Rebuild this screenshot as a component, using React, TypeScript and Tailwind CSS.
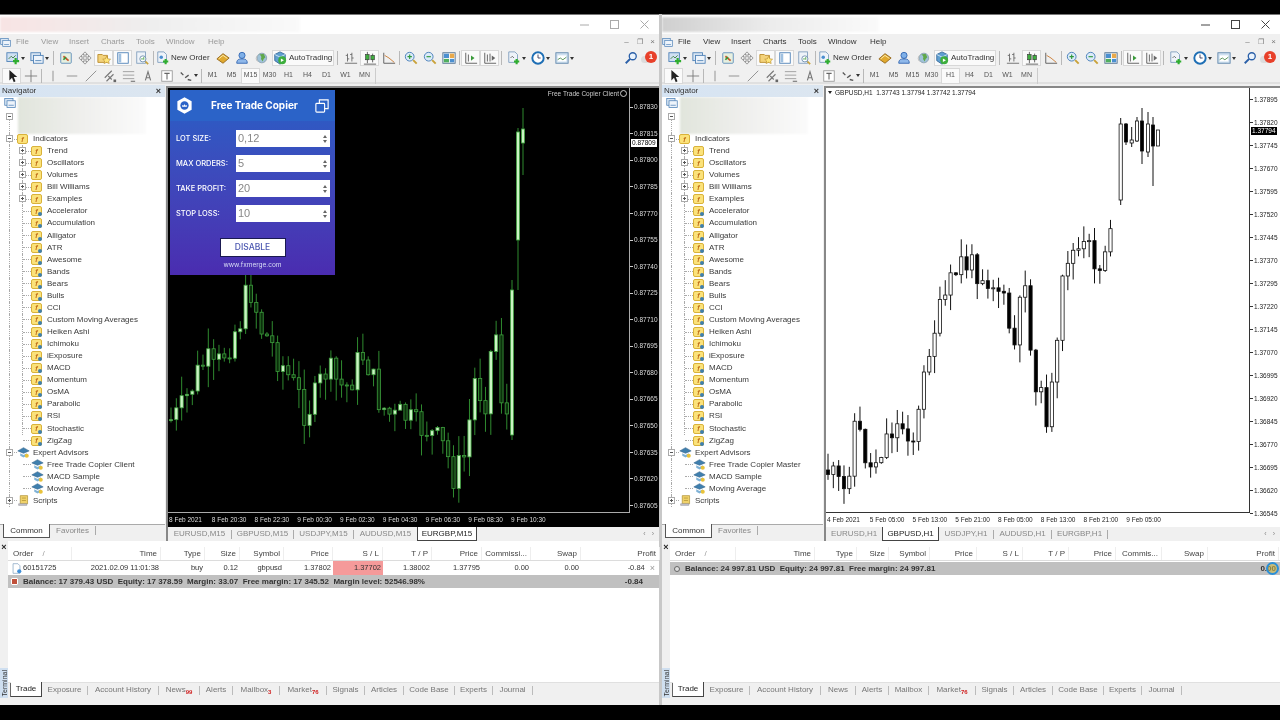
import type { ReactNode } from "react";

type Pt = [number, number];
type Candle = { x: number; o: number; c: number; h: number; l: number };

function build(points: Pt[], seed: number, amp: number, extra: Candle[]): Candle[] {
  const out: Candle[] = [];
  let s = seed;
  const rnd = () => {
    s = (s * 9301 + 49297) % 233280;
    return s / 233280;
  };
  let prev = points[0][1];
  for (let x = points[0][0]; x <= points[points.length - 1][0]; x += 5.33) {
    let i = 0;
    while (i < points.length - 2 && points[i + 1][0] < x) i++;
    const [x0, y0] = points[i];
    const [x1, y1] = points[i + 1];
    const y = y0 + ((y1 - y0) * (x - x0)) / (x1 - x0);
    const c = y + (rnd() - 0.5) * amp;
    const top = Math.min(prev, c);
    const bot = Math.max(prev, c);
    out.push({ x, o: prev, c, h: top - rnd() * amp * 0.6, l: bot + rnd() * amp * 0.6 });
    prev = c;
  }
  return [...out, ...extra];
}

const leftCandles = build(
  [[171, 420], [180, 415], [190, 390], [205, 360], [215, 375], [225, 350], [240, 320], [250, 285], [262, 330], [275, 350], [285, 370], [295, 390], [305, 410], [315, 400], [325, 370], [335, 380], [345, 390], [355, 370], [365, 350], [375, 390], [385, 410], [395, 420], [405, 415], [415, 430], [425, 425], [435, 440], [445, 450], [455, 478], [465, 455], [475, 380], [485, 400], [495, 320], [502, 400], [508, 420]],
  7,
  36,
  [
    { x: 512, o: 435, c: 290, h: 280, l: 440 },
    { x: 518, o: 240, c: 132, h: 128, l: 290 },
    { x: 523, o: 143, c: 129, h: 108, l: 175 },
  ],
);

const rightCandles = build(
  [[828, 470], [845, 495], [855, 420], [870, 470], [890, 430], [905, 425], [915, 440], [930, 340], [945, 300], [960, 262], [980, 270], [1000, 290], [1015, 350], [1025, 270], [1030, 350], [1045, 420], [1055, 380], [1065, 255], [1090, 250], [1100, 270], [1115, 200]],
  11,
  30,
  [
    { x: 1120.7, o: 200, c: 124, h: 118, l: 205 },
    { x: 1126, o: 124, c: 142, h: 123, l: 145 },
    { x: 1131.7, o: 143, c: 140, h: 127, l: 147 },
    { x: 1137, o: 141, c: 121, h: 117, l: 142 },
    { x: 1142, o: 121, c: 151, h: 108, l: 164 },
    { x: 1148, o: 152, c: 124, h: 112, l: 157 },
    { x: 1153, o: 125, c: 146, h: 117, l: 186 },
    { x: 1158, o: 146, c: 130, h: 130, l: 146 },
  ],
);

function Ico({ children, className = "w-[14px] h-[14px]" }: { children: ReactNode; className?: string }) {
  return (
    <svg viewBox="0 0 16 16" className={className} fill="none">
      {children}
    </svg>
  );
}

const icons: Record<string, ReactNode> = {
  newchart: <><rect x="1" y="2" width="12" height="10" fill="#cfe0f2" stroke="#4b7fb5" /><path d="M3 9l3-3 2 2 3-3" stroke="#3a7a3a" /><path d="M11 8v7M8 11.500h7" stroke="#2fae2f" strokeWidth="2.500" /></>,
  profiles: <><rect x="1" y="2" width="11" height="9" fill="#dbe7f4" stroke="#4b7fb5" /><rect x="4" y="5" width="11" height="9" fill="#eef4fb" stroke="#4b7fb5" /><path d="M6 11h7" stroke="#4b7fb5" /></>,
  market: <><rect x="2" y="2" width="12" height="12" rx="1" fill="#e7f0e0" stroke="#5a8ab8" /><path d="M5 6l6 5" stroke="#c9572b" strokeWidth="2" /><path d="M5 10l3-3" stroke="#3a9a3a" strokeWidth="2" /></>,
  nav: <><path d="M8 1l3 3H9v3h3V5l3 3-3 3V9H9v3h2l-3 3-3-3h2V9H4v2L1 8l3-3v2h3V4H5z" fill="#eee" stroke="#777" strokeWidth=".8" /></>,
  star: <><path d="M1 4h5l1 1h5v8H1z" fill="#f3d27a" stroke="#b98a2a" /><path d="M11 6l1.500 3 3 .4-2.200 2 .6 3-2.900-1.500-2.900 1.500.6-3-2.200-2 3-.4z" fill="#ffe67a" stroke="#b98a2a" strokeWidth=".7" /></>,
  term: <><rect x="2" y="2" width="12" height="12" fill="#fff" stroke="#4b7fb5" /><rect x="3" y="3" width="3" height="10" fill="#9fc0e0" /></>,
  tester: <><rect x="2" y="1" width="10" height="13" fill="#eef3f9" stroke="#7e9dbd" /><circle cx="9" cy="9" r="3.500" fill="#fff" stroke="#6a8cab" /><path d="M12 12l3 3" stroke="#c9a23a" strokeWidth="2" /><path d="M8 10V8M10 10V7" stroke="#3a9a3a" /></>,
  order: <><path d="M2 1h7l3 3v9H2z" fill="#eef3f9" stroke="#7e9dbd" /><circle cx="6" cy="7" r="2" fill="#4b8fd0" /><path d="M11 9v6M8 12h6" stroke="#2fae2f" strokeWidth="2.400" /></>,
  doc: <><path d="M3 1h7l3 3v11H3z" fill="#fff" stroke="#7e9dbd" /><circle cx="12" cy="12" r="3" fill="#3f8fd8" /></>,
  editor: <><path d="M1 9l7-6 7 5-7 6z" fill="#e0a92f" stroke="#94661a" /><path d="M3 9l5-4 5 3.500" stroke="#fff2b8" /></>,
  people: <><circle cx="8" cy="5" r="3.500" fill="#7fb0e8" stroke="#2f64b0" /><path d="M2 14c0-4 2-5 6-5s6 1 6 5z" fill="#8fb8ea" stroke="#2f64b0" /></>,
  globe: <><circle cx="9" cy="8" r="5.500" fill="#9fc2d8" stroke="#8aa0b0" /><path d="M6 4c2 1 3 3 2 5l2 3 1-3 2-2-2-4z" fill="#5fa84a" /><path d="M4 5c-2 2-2 5 0 7" stroke="#bbb" /></>,
  auto: <><path d="M8 1l6 3v7l-6 4-6-4V4z" fill="#5f9fd0" stroke="#37699a" /><path d="M2 4l6 3 6-3" stroke="#d7e9f7" /><circle cx="10.500" cy="10.500" r="4.500" fill="#3dae3d" /><path d="M9 8.500v4l3.500-2z" fill="#fff" /></>,
  bar: <><path d="M4 3v9M2 5h2M4 9h2M9 2v10M7 4h2M9 8h2M1 14h14" stroke="#666" /></>,
  candle: <><path d="M5 1v13M11 3v10M1 15h14" stroke="#555" /><rect x="3" y="4" width="4" height="6" fill="#3fae3f" stroke="#333" strokeWidth=".7" /><rect x="9" y="5" width="4" height="5" fill="#3fae3f" stroke="#333" strokeWidth=".7" /></>,
  line: <><path d="M2 2v12h13" stroke="#555" /><path d="M3 5l5 3 6 5" stroke="#c9772b" /></>,
  zoomin: <><circle cx="6.500" cy="6.500" r="5" fill="#dbeafa" stroke="#3f78b5" /><path d="M4 6.500h5M6.500 4v5" stroke="#2f9a3a" strokeWidth="1.300" /><path d="M10.500 10.500l4 4" stroke="#c9a23a" strokeWidth="2.200" /></>,
  zoomout: <><circle cx="6.500" cy="6.500" r="5" fill="#dbeafa" stroke="#3f78b5" /><path d="M4 6.500h5" stroke="#2f9a3a" strokeWidth="1.300" /><path d="M10.500 10.500l4 4" stroke="#c9a23a" strokeWidth="2.200" /></>,
  grid: <><rect x="1" y="2" width="14" height="12" fill="#fff" stroke="#4a6a8a" /><rect x="2" y="3" width="6" height="5" fill="#4b8fd0" /><rect x="9" y="3" width="5" height="5" fill="#e9a94a" /><rect x="2" y="9" width="6" height="4" fill="#4fae5f" /><rect x="9" y="9" width="5" height="4" fill="#4b8fd0" /></>,
  shift: <><path d="M2 2v12h13M5 4v8" stroke="#555" /><path d="M8 5v6l4-3z" fill="#3a9a3a" /></>,
  scroll: <><path d="M2 2v12h13M5 4v8M8 3v9" stroke="#555" /><path d="M10 5v6l4-3z" fill="#666" /></>,
  indic: <><path d="M2 1h7l3 3v9H2z" fill="#eef3f9" stroke="#7e9dbd" /><path d="M4 8l2-2 2 2" stroke="#666" /><path d="M11 9v6M8 12h6" stroke="#2fae2f" strokeWidth="2.400" /></>,
  clock: <><circle cx="8" cy="8" r="6.500" fill="#fff" stroke="#1f6fb5" strokeWidth="2.200" /><path d="M8 4v4h3" stroke="#335" /></>,
  templ: <><rect x="1" y="2" width="14" height="12" fill="#cfe0f0" stroke="#5f86aa" /><rect x="3" y="5" width="10" height="7" fill="#fff" /><path d="M3 10l3-2 3 2 4-3" stroke="#4a8a4a" /></>,
  search: <><circle cx="10" cy="6" r="4" fill="#eaf3fc" stroke="#2a5fa8" strokeWidth="1.500" /><path d="M7 9l-5 5" stroke="#2a5fa8" strokeWidth="2.200" /></>,
  arrow: <><path d="M5 1v12l3-3 2 5 2-1-2-5h4z" fill="#222" /></>,
  cross: <><path d="M8 1v14M1 8h14" stroke="#777" /></>,
  vline: <><path d="M8 2v12" stroke="#888" /></>,
  hline: <><path d="M2 8h12" stroke="#888" /></>,
  diag: <><path d="M2 14L14 2" stroke="#888" /></>,
  channel: <><path d="M2 10l8-8M4 14l8-8M6 8l4 4" stroke="#777" strokeWidth="1.300" /><path d="M12 12h3v3h-3z" fill="#666" /></>,
  fibo: <><path d="M1 3h13M1 7h13M1 11h13" stroke="#999" /><path d="M10 14h5" stroke="#555" /></>,
  text: <><path d="M5 13l3-10 3 10M6 10h4" stroke="#777" strokeWidth="1.300" /></>,
  label: <><rect x="2" y="2" width="12" height="12" fill="#fff" stroke="#999" /><path d="M5 5h6M8 5v7" stroke="#666" strokeWidth="1.200" /></>,
  arrows: <><path d="M2 4l3 3M7 10l4-3M10 12l4 1" stroke="#555" strokeWidth="1.500" /></>,
};

function Btn({ name, active, caret }: { name: string; active?: boolean; caret?: boolean }) {
  return (
    <div
      className={`flex items-center justify-center h-[16px] shrink-0 ${caret ? "w-[24px] gap-[1px]" : "w-[19px]"} ${
        active ? "bg-[#fafafa] border border-[#d8d8d8]" : ""
      }`}
    >
      <Ico>{icons[name]}</Ico>
      {caret && <span className="w-0 h-0 border-x-[2px] border-x-transparent border-t-[3px] border-t-[#333]" />}
    </div>
  );
}

const Sep = ({ m = "mx-[2px]" }: { m?: string }) => <div className={`w-[1px] h-[14px] ${m} bg-[#b8b8b8] shrink-0`} />;

function Toolbars({ timeframe, spacer }: { timeframe: string; spacer: string }) {
  const frames = ["M1", "M5", "M15", "M30", "H1", "H4", "D1", "W1", "MN"];
  return (
    <>
      <div className="flex items-center h-[16px] pl-[3px] bg-[#f0f0f0] text-[8px] text-[#333]">
        <Btn name="newchart" caret />
        <Btn name="profiles" caret />
        <Sep />
        <Btn name="market" />
        <Btn name="nav" />
        <Btn name="star" active />
        <Btn name="term" active />
        <Btn name="tester" />
        <Sep />
        <div className="flex items-center w-[57px] shrink-0 gap-[1px] whitespace-nowrap">
          <Ico>{icons.order}</Ico>
          <span>New Order</span>
        </div>
        <Btn name="editor" />
        <Btn name="people" />
        <Btn name="globe" />
        <div className="flex items-center w-[62px] h-[16px] gap-[2px] ml-[2px] shrink-0 bg-[#fafafa] border border-[#d8d8d8] whitespace-nowrap">
          <Ico>{icons.auto}</Ico>
          <span>AutoTrading</span>
        </div>
        <Sep m="mx-[3px]" />
        <Btn name="bar" />
        <Btn name="candle" active />
        <Btn name="line" />
        <Sep m="mx-[1px]" />
        <Btn name="zoomin" />
        <Btn name="zoomout" />
        <Btn name="grid" />
        <Sep m="mx-[1px]" />
        <Btn name="shift" active />
        <Btn name="scroll" active />
        <Sep />
        <Btn name="indic" caret />
        <Btn name="clock" caret />
        <Btn name="templ" caret />
        <div className={`${spacer} shrink-0`} />
        <Btn name="search" />
        <div className="relative w-[20px] h-[16px] shrink-0">
          <div className="absolute left-[1px] top-[6px] w-[9px] h-[7px] rounded-full bg-[#dcdcdc]" />
          <div className="absolute left-[5px] top-[1px] w-[12px] h-[12px] rounded-full bg-[#e8402a] text-white text-[8px] leading-[12px] text-center font-bold">
            1
          </div>
        </div>
      </div>
      <div className="flex items-center h-[18px] pt-[3px] pl-[2px] bg-[#f0f0f0] text-[7px] text-[#555] border-b-[2px] border-[#e0e0e0]">
        <Btn name="arrow" active />
        <Btn name="cross" />
        <Sep m="mx-[1px]" />
        <Btn name="vline" />
        <Btn name="hline" />
        <Btn name="diag" />
        <Btn name="channel" />
        <Btn name="fibo" />
        <Btn name="text" />
        <Btn name="label" />
        <Btn name="arrows" caret />
        <Sep m="mx-[1px]" />
        {frames.map((f) => (
          <div
            key={f}
            className={`w-[19px] h-[16px] shrink-0 flex items-center justify-center ${
              f === timeframe ? "bg-[#fafafa] border border-[#d8d8d8]" : ""
            }`}
          >
            {f}
          </div>
        ))}
        <div className="w-[1px] h-[16px] bg-[#ccc] ml-[1px]" />
      </div>
    </>
  );
}

const treeRows: { label: string; level: number; icon: "f" | "fx" | "ea" | "sc"; exp?: "+" | "-" }[] = [
  { label: "Indicators", level: 0, icon: "f", exp: "-" },
  { label: "Trend", level: 1, icon: "f", exp: "+" },
  { label: "Oscillators", level: 1, icon: "f", exp: "+" },
  { label: "Volumes", level: 1, icon: "f", exp: "+" },
  { label: "Bill Williams", level: 1, icon: "f", exp: "+" },
  { label: "Examples", level: 1, icon: "f", exp: "+" },
  ...["Accelerator", "Accumulation", "Alligator", "ATR", "Awesome", "Bands", "Bears", "Bulls", "CCI", "Custom Moving Averages", "Heiken Ashi", "Ichimoku", "iExposure", "MACD", "Momentum", "OsMA", "Parabolic", "RSI", "Stochastic", "ZigZag"].map((label) => ({
    label,
    level: 1,
    icon: "fx" as const,
  })),
  { label: "Expert Advisors", level: 0, icon: "ea", exp: "-" },
];

function TreeIcon({ kind }: { kind: string }) {
  if (kind === "ea")
    return (
      <Ico className="w-[13px] h-[13px]">
        <path d="M1 6l7-4 7 4-7 3z" fill="#3f7fae" stroke="#2a5a80" strokeWidth=".6" />
        <path d="M4 9l4 2 4-2v3l-4 2-4-2z" fill="#7fb2d6" />
        <circle cx="12" cy="12" r="2.500" fill="#e8c23a" />
      </Ico>
    );
  if (kind === "sc")
    return (
      <Ico className="w-[13px] h-[13px]">
        <path d="M4 2h9v10H4z" fill="#f0d26a" stroke="#a98a2a" strokeWidth=".8" />
        <path d="M2 12h10v2H2z" fill="#c9c9d8" stroke="#888" strokeWidth=".6" />
        <path d="M6 5h5M6 8h5" stroke="#a98a2a" strokeWidth=".8" />
      </Ico>
    );
  return (
    <div className="relative w-[11px] h-[10px] rounded-[2px] bg-[#fbe27a] border border-[#d9b23a] shrink-0 flex items-center justify-center">
      <span className="text-[7px] leading-none italic font-bold text-[#c2701a]">f</span>
      {kind === "fx" && <span className="absolute right-[-1px] bottom-[-1px] w-[4px] h-[4px] rounded-full bg-[#3f7fae]" />}
    </div>
  );
}

function Expander({ sign, className }: { sign: string; className: string }) {
  return (
    <div className={`absolute w-[7px] h-[7px] bg-white border border-[#aaa] flex items-center justify-center ${className}`}>
      <div className="relative w-[3px] h-[1px] bg-[#555]">
        {sign === "+" && <div className="absolute left-[1px] top-[-1px] w-[1px] h-[3px] bg-[#555]" />}
      </div>
    </div>
  );
}

function Row({ children, line2, exp, level }: { children: ReactNode; line2?: boolean; exp?: string; level: number }) {
  return (
    <div className="flex items-center h-[12.07px] relative">
      <div className="w-[10px] h-full border-r border-dotted border-[#aaa] shrink-0" />
      <div className={`${level === 0 ? "w-[0px]" : "w-[13px]"} h-full shrink-0 ${line2 ? "border-r border-dotted border-[#aaa]" : ""}`} />
      {exp && <Expander sign={exp} className={level === 0 ? "left-[6px] top-[2px]" : "left-[19px] top-[2px]"} />}
      <div className={`${level === 0 ? "w-[7px]" : "w-[8px]"} border-t border-dotted border-[#aaa] shrink-0`} />
      {children}
    </div>
  );
}

function Navigator({ widthClass, leaves }: { widthClass: string; leaves: string[] }) {
  return (
    <div className={`${widthClass} shrink-0 bg-[#f0f0f0] flex flex-col`}>
      <div className="h-[12px] mt-[1px] flex items-center justify-between px-[2px] bg-gradient-to-r from-[#d6e4f3] to-[#dce6f0] text-[8px] text-[#333]">
        <span>Navigator</span>
        <span className="font-bold text-[9px] mr-[2px] leading-none">×</span>
      </div>
      <div className="flex-1 bg-white text-[8px] leading-[12px] text-[#3a3a3a] overflow-hidden">
        <div className="flex h-[36px] pl-[2px]">
          <div className="w-[15px] flex flex-col items-center shrink-0">
            <Ico className="w-[12px] h-[12px]">{icons.profiles}</Ico>
            <div className="w-[7px] h-[7px] mt-[4px] bg-white border border-[#aaa] flex items-center justify-center">
              <div className="w-[3px] h-[1px] bg-[#555]" />
            </div>
            <div className="flex-1 border-l border-dotted border-[#aaa]" />
          </div>
          <div className="w-[128px] h-[37px] ml-[1px] bg-gradient-to-r from-[#e1e5dc] via-[#efefed] to-[#fbfbfb] blur-[1px]" />
        </div>
        {treeRows.map((r, i) => (
          <Row key={r.label} level={r.level} exp={r.exp} line2={r.level === 1 && i < 25}>
            <div className="w-[16px] flex justify-start shrink-0">
              <TreeIcon kind={r.icon} />
            </div>
            <span className="whitespace-nowrap">{r.label}</span>
          </Row>
        ))}
        {leaves.map((l) => (
          <Row key={l} level={1} line2={false}>
            <div className="w-[16px] flex justify-start shrink-0">
              <TreeIcon kind="ea" />
            </div>
            <span className="whitespace-nowrap">{l}</span>
          </Row>
        ))}
        <Row level={0} exp="+">
          <div className="w-[16px] flex justify-start shrink-0">
            <TreeIcon kind="sc" />
          </div>
          <span>Scripts</span>
        </Row>
      </div>
      <div className="h-[17px] flex items-start pl-[3px] bg-[#f0f0f0] border-t border-[#aaa] text-[8px]">
        <div className="h-[14px] w-[47px] -mt-[1px] flex items-center justify-center bg-white border-l border-r border-b border-[#555] text-[#333]">
          Common
        </div>
        <div className="w-[45px] h-[12px] flex items-center justify-center text-[#888]">Favorites</div>
        <div className="w-[1px] h-[9px] mt-[1px] bg-[#aaa]" />
      </div>
    </div>
  );
}

function CandleChart({ data, viewBox, dark, width, height }: { data: Candle[]; viewBox: string; dark: boolean; width: number; height: number }) {
  return (
    <svg viewBox={viewBox} width={width} height={height} className="block">
      {data.map((d) => {
        const up = d.c < d.o;
        const top = Math.min(d.o, d.c);
        const h = Math.max(Math.abs(d.o - d.c), 1);
        return (
          <g key={d.x}>
            <line x1={d.x} x2={d.x} y1={d.h} y2={d.l} stroke={dark ? "#2f8a2f" : "#111"} strokeWidth={1} />
            <rect
              x={d.x - 1.6}
              y={top}
              width={3.2}
              height={h}
              fill={dark ? (up ? "#c9f3c2" : "#0b2f0b") : up ? "#fff" : "#000"}
              stroke={dark ? "#3e9e3e" : "#111"}
              strokeWidth={0.8}
            />
          </g>
        );
      })}
    </svg>
  );
}

function ChartTabs({ tabs, active }: { tabs: { l: string; w: string }[]; active: string }) {
  return (
    <div className="h-[14px] bg-[#f0f0f0] flex items-center text-[8px] text-[#888]">
      {tabs.map((t, i) => (
        <div
          key={t.l}
          className={`${t.w} h-[14px] shrink-0 flex items-center justify-center ${
            t.l === active ? "bg-white border-x border-b border-[#444] text-[#222]" : ""
          }`}
        >
          <span className="flex-1 text-center">{t.l}</span>
          {t.l !== active && tabs[i + 1]?.l !== active && <span className="w-px h-[9px] bg-[#aaa]" />}
        </div>
      ))}
      <div className="flex-1" />
      <span className="text-[7px] text-[#888] mr-[6px]">‹</span>
      <span className="text-[7px] text-[#888] mr-[5px]">›</span>
    </div>
  );
}

const tabs = [
  { l: "Exposure", w: "w-[46px]", n: "w-[46px]" },
  { l: "Account History", w: "w-[71px]", n: "w-[71px]" },
  { l: "News", w: "w-[41px]", n: "w-[35px]", b: "99" },
  { l: "Alerts", w: "w-[33px]", n: "w-[33px]" },
  { l: "Mailbox", w: "w-[47px]", n: "w-[40px]", b: "3" },
  { l: "Market", w: "w-[47px]", n: "w-[47px]", b: "76" },
  { l: "Signals", w: "w-[38px]", n: "w-[38px]" },
  { l: "Articles", w: "w-[39px]", n: "w-[39px]" },
  { l: "Code Base", w: "w-[51px]", n: "w-[51px]" },
  { l: "Experts", w: "w-[38px]", n: "w-[38px]" },
  { l: "Journal", w: "w-[40px]", n: "w-[40px]" },
];

function Terminal({ cols, headers, children, badges }: { cols: string; headers: string[]; children: ReactNode; badges: string[] }) {
  return (
    <div className="flex-1 flex bg-white min-h-0">
      <div className="w-[8px] shrink-0 bg-[#f0f0f0] flex flex-col items-center justify-between pb-[7px]">
        <span className="text-[9px] font-bold leading-none mt-[2px] text-[#222]">×</span>
        <div className="w-[8px] h-[30px] bg-[#cfdff0] flex items-center justify-center">
          <span className="[writing-mode:vertical-rl] rotate-180 text-[7px] text-[#333] leading-none">Terminal</span>
        </div>
      </div>
      <div className="flex-1 flex flex-col min-w-0">
        <div className={`grid ${cols} h-[14px] mt-[6px] border-b border-[#dcdcdc] text-[8px] text-[#444]`}>
          {headers.map((h, i) => (
            <div key={i} className={`flex items-center whitespace-nowrap border-r border-[#eee] ${i === 0 ? "pl-[5px]" : "justify-end pr-[3px]"}`}>
              {h}
              {i === 0 && <span className="ml-[9px] text-[#999]">/</span>}
            </div>
          ))}
        </div>
        <div className="flex-1 min-h-0 text-[7.5px] text-[#333]">{children}</div>
        <div className="h-[15px] flex items-center bg-[#f0f0f0] text-[8px] text-[#777] border-t-[1px] border-[#e0e0e0]">
          <div className="w-[3px] h-full border-r border-[#666]" />
          <div className="w-[31px] h-[15px] -mt-[1px] flex items-center justify-center bg-white border-r border-b border-[#444] text-[#222]">Trade</div>
          {tabs.map((t) => (
            <div key={t.l} className={`${badges.length > 1 ? t.w : t.n} shrink-0 flex items-center justify-center border-r border-[#bbb] h-[9px] whitespace-nowrap`}>
              {t.l}
              {badges.includes(t.l) && <span className="text-[6px] text-[#d02020] font-bold self-end translate-y-[2px]">{t.b}</span>}
            </div>
          ))}
        </div>
        <div className="h-[8px] bg-[#f0f0f0]" />
      </div>
    </div>
  );
}

const Cell = ({ children, pink }: { children?: ReactNode; pink?: boolean }) => (
  <div className={`flex items-center justify-end pr-[2px] whitespace-nowrap ${pink ? "bg-[#f59a9a]" : ""}`}>{children}</div>
);

function Window({
  title,
  menuColor,
  ctrlStroke,
  timeframe,
  spacer,
  nav,
  chart,
  axis,
  dates,
  tabs: chartTabs,
  terminal,
}: {
  title: string;
  menuColor: string;
  ctrlStroke: string;
  timeframe: string;
  spacer: string;
  nav: ReactNode;
  chart: ReactNode;
  axis: ReactNode;
  dates: ReactNode;
  tabs: ReactNode;
  terminal: ReactNode;
}) {
  return (
    <div className="h-full flex-1 min-w-0 flex flex-col bg-white border-t border-[#777]">
      <div className="h-[19px] flex items-center bg-white shrink-0">
        <div className={`${title} h-[15px] blur-[1px]`} />
        <div className="flex-1" />
        {[
          <path key="min" d="M0 5h9" />,
          <rect key="max" x=".5" y=".5" width="8" height="8" />,
          <path key="close" d="M.5.5l8 8M8.500.5l-8 8" />,
        ].map((shape, i) => (
          <div key={i} className="w-[30px] flex justify-center">
            <svg viewBox="0 0 9 9" className="w-[9px] h-[9px]" fill="none" stroke={ctrlStroke}>
              {shape}
            </svg>
          </div>
        ))}
      </div>
      <div className={`h-[16px] flex items-center bg-[#f0f0f0] text-[8px] ${menuColor} shrink-0`}>
        <Ico className="w-[11px] h-[11px] mr-[5px]">{icons.profiles}</Ico>
        <span className="w-[25px]">File</span>
        <span className="w-[28px]">View</span>
        <span className="w-[32px]">Insert</span>
        <span className="w-[35px]">Charts</span>
        <span className="w-[30px]">Tools</span>
        <span className="w-[42px]">Window</span>
        <span>Help</span>
        <div className="flex-1" />
        <span className="w-[13px] text-[#777] text-center">–</span>
        <span className="w-[13px] text-[#777] text-center text-[7px]">❐</span>
        <span className="w-[13px] text-[#777] text-center">×</span>
      </div>
      <Toolbars timeframe={timeframe} spacer={spacer} />
      <div className="h-[457px] flex bg-[#f0f0f0] shrink-0">
        {nav}
        <div className="flex-1 min-w-0 flex flex-col mt-[2px] border-l-[2px] border-t-[2px] border-[#888] ml-[1px]">
          <div className="flex-1 flex min-h-0">
            {chart}
            {axis}
          </div>
          {dates}
          {chartTabs}
        </div>
      </div>
      {terminal}
    </div>
  );
}

const leftPrices = ["0.87830", "0.87815", "0.87800", "0.87785", "0.87770", "0.87755", "0.87740", "0.87725", "0.87710", "0.87695", "0.87680", "0.87665", "0.87650", "0.87635", "0.87620", "0.87605"];
const rightPrices = ["1.37895", "1.37820", "1.37745", "1.37670", "1.37595", "1.37520", "1.37445", "1.37370", "1.37295", "1.37220", "1.37145", "1.37070", "1.36995", "1.36920", "1.36845", "1.36770", "1.36695", "1.36620", "1.36545"];

function Axis({ prices, step, top, dark, current, currentTop }: { prices: string[]; step: string; top: string; dark: boolean; current: string; currentTop: string }) {
  return (
    <div className={`relative flex-1 text-[6.5px] ${dark ? "bg-black text-[#ddd]" : "bg-white text-[#222]"} ${top}`}>
      {prices.map((p) => (
        <div key={p} className={`${step} flex items-center`}>
          <span className={`w-[3px] h-px mr-[1px] ${dark ? "bg-[#ccc]" : "bg-[#333]"}`} />
          {p}
        </div>
      ))}
      <div className={`absolute left-[1px] px-[1px] h-[8px] leading-[8px] ${currentTop} ${dark ? "bg-white text-black" : "bg-black text-white"}`}>{current}</div>
    </div>
  );
}

function Dates({ labels, dark }: { labels: string[]; dark: boolean }) {
  return (
    <div className={`h-[14px] flex items-center text-[6.5px] pl-[1px] ${dark ? "bg-black text-[#ddd]" : "bg-white text-[#222]"}`}>
      {labels.map((l) => (
        <div key={l} className="w-[42.75px] shrink-0 whitespace-nowrap">
          {l}
        </div>
      ))}
    </div>
  );
}

const leftCols = "grid-cols-[64px_89px_44px_35px_44px_49px_50px_49px_50px_49px_50px_79px]";
const rightCols = "grid-cols-[66px_79px_42px_32px_41px_47px_46px_46px_47px_46px_46px_71px]";

function CopierPanel() {
  const rows = [
    ["LOT SIZE:", "0,12"],
    ["MAX ORDERS:", "5"],
    ["TAKE PROFIT:", "20"],
    ["STOP LOSS:", "10"],
  ];
  return (
    <div className="absolute left-[2px] top-[2px] w-[165px] h-[185px] flex flex-col bg-gradient-to-b from-[#2460c6] to-[#4a2cb0] font-['Inter',sans-serif] text-white">
      <div className="h-[31px] flex items-center px-[5px] bg-[#2b63c8] shrink-0">
        <svg viewBox="0 0 16 16" className="w-[19px] h-[19px]">
          <path d="M8 1l6 3.500v7L8 15l-6-3.500v-7z" fill="#fff" />
          <circle cx="8" cy="8" r="3.500" fill="#2b63c8" />
          <path d="M6 9V7.500l1 .8 1-1.300 1 1.300 1-.8V9z" fill="#fff" />
        </svg>
        <div className="flex-1 text-center text-[10px] font-bold">Free Trade Copier</div>
        <svg viewBox="0 0 16 16" className="w-[14px] h-[14px]" fill="none" stroke="#fff" strokeWidth="1.300">
          <rect x="1" y="5" width="10" height="10" rx="1" />
          <path d="M5 5V1h10v10h-4" />
        </svg>
        <div className="w-[1px]" />
      </div>
      <div className="flex flex-col gap-[8px] pl-[6px] pt-[9px]">
        {rows.map(([l, v]) => (
          <div key={l} className="flex items-center h-[17px]">
            <div className="w-[60px] text-[7.5px] font-medium whitespace-nowrap">{l}</div>
            <div className="w-[94px] h-[17px] flex items-center justify-between bg-white pl-[2px] pr-[3px] font-['Liberation_Sans',sans-serif] text-[11px] text-[#888]">
              <span>{v}</span>
              <div className="flex flex-col gap-[2px]">
                <span className="w-0 h-0 border-x-[2px] border-x-transparent border-b-[3px] border-b-[#666]" />
                <span className="w-0 h-0 border-x-[2px] border-x-transparent border-t-[3px] border-t-[#666]" />
              </div>
            </div>
          </div>
        ))}
      </div>
      <div className="mx-auto mt-[16px] w-[66px] h-[19px] flex items-center justify-center bg-white border border-[#1a1a50] text-[8.5px] text-[#4a56b0] font-medium">
        DISABLE
      </div>
      <div className="text-center text-[6.5px] text-[#d8dcf5] mt-[4px]">www.fxmerge.com</div>
    </div>
  );
}

export default function App() {
  return (
    <div className="w-[1280px] h-[720px] overflow-hidden bg-black flex flex-col blur-[0.4px] font-['Liberation_Sans',sans-serif]">
      <div className="h-[14px] shrink-0" />
      <div className="h-[691px] flex shrink-0">
        <div className="w-[661px] h-full flex shrink-0 border-r-[2px] border-[#c8c8c8]">
          <Window
            title="w-[300px] bg-gradient-to-r from-[#f8e4e4] via-[#eeeeee] to-[#fafafa]"
            menuColor="text-[#9a9a9a]"
            ctrlStroke="#aaa"
            timeframe="M15"
            spacer="w-[45px]"
            nav={<Navigator widthClass="w-[165px]" leaves={["Free Trade Copier Client", "MACD Sample", "Moving Average"]} />}
            chart={
              <div className="relative w-[462px] h-[425px] bg-black shrink-0 border-r border-b border-[#aaa]">
                <CandleChart data={leftCandles} viewBox="168 88 462 425" dark width={462} height={425} />
                <CopierPanel />
                <div className="absolute right-[2px] top-[1px] flex items-center gap-[1px] text-[6.5px] text-[#ccc]">
                  Free Trade Copier Client
                  <span className="w-[7px] h-[7px] rounded-full border border-[#ccc]" />
                </div>
              </div>
            }
            axis={<Axis prices={leftPrices} step="h-[26.55px]" top="pt-[6px]" dark current="0.87809" currentTop="top-[51px]" />}
            dates={<Dates labels={["8 Feb 2021", "8 Feb 20:30", "8 Feb 22:30", "9 Feb 00:30", "9 Feb 02:30", "9 Feb 04:30", "9 Feb 06:30", "9 Feb 08:30", "9 Feb 10:30"]} dark />}
            tabs={
              <ChartTabs
                active="EURGBP,M15"
                tabs={[
                  { l: "EURUSD,M15", w: "w-[64px]" },
                  { l: "GBPUSD,M15", w: "w-[62px]" },
                  { l: "USDJPY,M15", w: "w-[60px]" },
                  { l: "AUDUSD,M15", w: "w-[63px]" },
                  { l: "EURGBP,M15", w: "w-[60px]" },
                ]}
              />
            }
            terminal={
              <Terminal cols={leftCols} headers={["Order", "Time", "Type", "Size", "Symbol", "Price", "S / L", "T / P", "Price", "Commissi...", "Swap", "Profit"]} badges={["News", "Mailbox", "Market"]}>
                <div className={`grid ${leftCols} h-[14px]`}>
                  <div className="flex items-center pl-[3px] gap-[1px]">
                    <Ico className="w-[11px] h-[11px]">{icons.doc}</Ico>60151725
                  </div>
                  <Cell>2021.02.09 11:01:38</Cell>
                  <Cell>buy</Cell>
                  <Cell>0.12</Cell>
                  <Cell>gbpusd</Cell>
                  <Cell>1.37802</Cell>
                  <Cell pink>1.37702</Cell>
                  <Cell>1.38002</Cell>
                  <Cell>1.37795</Cell>
                  <Cell>0.00</Cell>
                  <Cell>0.00</Cell>
                  <div className="flex items-center justify-end pr-[5px] gap-[5px]">
                    -0.84
                    <span className="text-[#999] text-[9px] leading-none">×</span>
                  </div>
                </div>
                <div className="h-[13px] flex items-center justify-between bg-[#c0c0c0] font-bold text-[8px] pl-[3px] pr-[16px] whitespace-nowrap">
                  <div className="flex items-center gap-[5px]">
                    <div className="w-[7px] h-[7px] rounded-[1px] bg-[#c0503a] border border-white" />
                    <span>Balance: 17 379.43 USD&nbsp; Equity: 17 378.59&nbsp; Margin: 33.07&nbsp; Free margin: 17 345.52&nbsp; Margin level: 52546.98%</span>
                  </div>
                  <span>-0.84</span>
                </div>
              </Terminal>
            }
          />
        </div>
        <div className="flex-1 min-w-0 flex pl-[1px] bg-[#c8c8c8]">
          <Window
            title="w-[217px] bg-gradient-to-r from-[#cfcfcf] via-[#ececec] to-[#fafafa]"
            menuColor="text-[#333]"
            ctrlStroke="#444"
            timeframe="H1"
            spacer="w-[2px]"
            nav={<Navigator widthClass="w-[161px]" leaves={["Free Trade Copier Master", "MACD Sample", "Moving Average"]} />}
            chart={
              <div className="relative w-[424px] h-[425px] bg-white shrink-0 border-r border-b border-[#333]">
                <CandleChart data={rightCandles} viewBox="826 88 424 425" dark={false} width={424} height={425} />
                <div className="absolute left-[2px] top-[0px] flex items-center gap-[3px] text-[6.5px] text-[#222]">
                  <span className="w-0 h-0 border-x-[2.500px] border-x-transparent border-t-[3px] border-t-[#222]" />
                  GBPUSD,H1&nbsp; 1.37743 1.37794 1.37742 1.37794
                </div>
              </div>
            }
            axis={<Axis prices={rightPrices} step="h-[23px]" top="pt-[0px]" dark={false} current="1.37794" currentTop="top-[39px]" />}
            dates={<Dates labels={["4 Feb 2021", "5 Feb 05:00", "5 Feb 13:00", "5 Feb 21:00", "8 Feb 05:00", "8 Feb 13:00", "8 Feb 21:00", "9 Feb 05:00"]} dark={false} />}
            tabs={
              <ChartTabs
                active="GBPUSD,H1"
                tabs={[
                  { l: "EURUSD,H1", w: "w-[56px]" },
                  { l: "GBPUSD,H1", w: "w-[57px]" },
                  { l: "USDJPY,H1", w: "w-[55px]" },
                  { l: "AUDUSD,H1", w: "w-[58px]" },
                  { l: "EURGBP,H1", w: "w-[56px]" },
                ]}
              />
            }
            terminal={
              <Terminal cols={rightCols} headers={["Order", "Time", "Type", "Size", "Symbol", "Price", "S / L", "T / P", "Price", "Commis...", "Swap", "Profit"]} badges={["Market"]}>
                <div className="relative h-[13px] mt-[1px] flex items-center justify-between bg-[#c0c0c0] font-bold text-[8px] pl-[4px] pr-[4px] whitespace-nowrap">
                  <div className="flex items-center gap-[5px]">
                    <div className="w-[6px] h-[6px] rounded-full border border-[#666] bg-[#ddd]" />
                    <span>Balance: 24 997.81 USD&nbsp; Equity: 24 997.81&nbsp; Free margin: 24 997.81</span>
                  </div>
                  <span>0.00</span>
                  <div className="absolute right-[1px] top-[0px] w-[13px] h-[13px] rounded-full border-[2px] border-[#2a8fd8] bg-[#c9b84a]/60" />
                </div>
              </Terminal>
            }
          />
        </div>
      </div>
    </div>
  );
}
